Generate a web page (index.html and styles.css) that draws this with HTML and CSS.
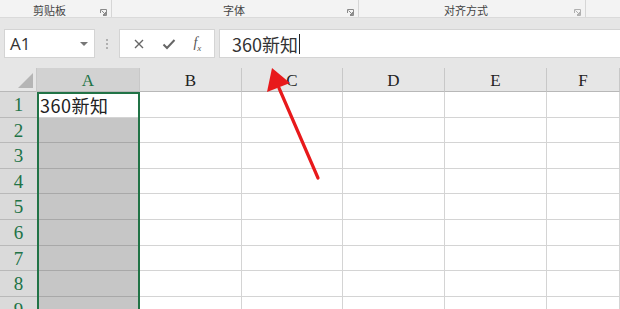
FILE: index.html
```html
<!DOCTYPE html>
<html lang="zh-CN">
<head>
    <meta charset="UTF-8">
    <title>360新知</title>
    <link rel="stylesheet" href="styles.css">
</head>
<body>
    <div class="ribbon">
        <div class="group g1"><span class="group-label">剪贴板</span><svg class="launcher" width="7" height="7" viewBox="0 0 7 7"><path d="M0.5 4V0.5H6.5V6.5H3M1.5 1.5L5.5 5.5M5.5 3V5.5H3" stroke="#8a8a8a" fill="none"/></svg></div>
        <div class="group g2"><span class="group-label">字体</span><svg class="launcher" width="7" height="7" viewBox="0 0 7 7"><path d="M0.5 4V0.5H6.5V6.5H3M1.5 1.5L5.5 5.5M5.5 3V5.5H3" stroke="#8a8a8a" fill="none"/></svg></div>
        <div class="group g3"><span class="group-label">对齐方式</span><svg class="launcher" width="7" height="7" viewBox="0 0 7 7"><path d="M0.5 4V0.5H6.5V6.5H3M1.5 1.5L5.5 5.5M5.5 3V5.5H3" stroke="#b0b0b0" fill="none"/></svg></div>
        <div class="group g4"></div>
    </div>
    <div class="formula-area">
        <div class="name-box">
            <span class="name-text">A1</span>
            <svg class="drop" width="8" height="4" viewBox="0 0 8 4"><path d="M0 0h8L4 4z" fill="#777"/></svg>
        </div>
        <div class="grip"><i></i><i></i><i></i></div>
        <div class="fx-buttons">
            <svg width="12" height="12" viewBox="0 0 12 12"><path d="M2 2l8 8M10 2l-8 8" stroke="#666" stroke-width="1.4"/></svg>
            <svg width="14" height="12" viewBox="0 0 14 12"><path d="M1.5 6.5l3.5 3.5 7.5-8" stroke="#666" stroke-width="2" fill="none"/></svg>
            <span class="fx">f<sub>x</sub></span>
        </div>
        <div class="formula-input"><span>360新知</span><span class="caret"></span></div>
    </div>
    <div class="sheet">
        <div class="grid">
            <div class="corner"></div>
            <div class="col-head active">A</div>
            <div class="col-head">B</div>
            <div class="col-head">C</div>
            <div class="col-head">D</div>
            <div class="col-head">E</div>
            <div class="col-head">F</div>

            <div class="row-head">1</div><div class="cell a1">360新知</div><div class="cell"></div><div class="cell"></div><div class="cell"></div><div class="cell"></div><div class="cell"></div>
            <div class="row-head">2</div><div class="cell sel"></div><div class="cell"></div><div class="cell"></div><div class="cell"></div><div class="cell"></div><div class="cell"></div>
            <div class="row-head">3</div><div class="cell sel"></div><div class="cell"></div><div class="cell"></div><div class="cell"></div><div class="cell"></div><div class="cell"></div>
            <div class="row-head">4</div><div class="cell sel"></div><div class="cell"></div><div class="cell"></div><div class="cell"></div><div class="cell"></div><div class="cell"></div>
            <div class="row-head">5</div><div class="cell sel"></div><div class="cell"></div><div class="cell"></div><div class="cell"></div><div class="cell"></div><div class="cell"></div>
            <div class="row-head">6</div><div class="cell sel"></div><div class="cell"></div><div class="cell"></div><div class="cell"></div><div class="cell"></div><div class="cell"></div>
            <div class="row-head">7</div><div class="cell sel"></div><div class="cell"></div><div class="cell"></div><div class="cell"></div><div class="cell"></div><div class="cell"></div>
            <div class="row-head">8</div><div class="cell sel"></div><div class="cell"></div><div class="cell"></div><div class="cell"></div><div class="cell"></div><div class="cell"></div>
            <div class="row-head">9</div><div class="cell sel"></div><div class="cell"></div><div class="cell"></div><div class="cell"></div><div class="cell"></div><div class="cell"></div>
        </div>
        <div class="selection"></div>
    </div>
    <svg class="arrow" width="620" height="309" viewBox="0 0 620 309">
        <line x1="318" y1="178" x2="279" y2="88" stroke="#e8191b" stroke-width="3.2" stroke-linecap="round"/>
        <path d="M272 68L267 92L290 83z" fill="#e8191b"/>
    </svg>
</body>
</html>
```

FILE: styles.css
```css
body {
    margin: 0;
    width: 620px;
    height: 309px;
    overflow: hidden;
    background-color: #e6e6e6;
    font-family: "Noto Sans CJK SC", sans-serif;
    position: relative;
}
.ribbon {
    display: flex;
    height: 17px;
    background-color: #f3f3f3;
    border-bottom: 1px solid #dadada;
}
.group {
    position: relative;
    height: 17px;
    border-right: 1px solid #d6d6d6;
    display: flex;
    justify-content: center;
}
.g1 { width: 111px; }
.g2 { width: 246px; }
.g3 { width: 226px; }
.g4 { flex: 1; border-right: none; }
.group-label {
    font-size: 11px;
    line-height: 17px;
    padding-top: 2px;
    color: #444;
    padding-right: 12px;
}
.g2 .group-label { padding-left: 10px; }
.launcher {
    position: absolute;
    right: 4px;
    top: 9px;
}
.formula-area {
    display: flex;
    align-items: center;
    height: 31px;
    padding-top: 10px;
    padding-bottom: 9px;
    box-sizing: content-box;
}
.name-box {
    margin-left: 4px;
    width: 91px;
    height: 29px;
    box-sizing: border-box;
    background-color: #fff;
    border: 1px solid #d4d4d4;
    display: flex;
    align-items: center;
    justify-content: space-between;
    padding: 0 6px 0 5px;
}
.name-text {
    font-family: "Open Sans", sans-serif;
    font-size: 17px;
    color: #333;
}
.grip {
    width: 24px;
    display: flex;
    flex-direction: column;
    align-items: center;
    gap: 2px;
}
.grip i {
    width: 2px;
    height: 2px;
    background-color: #b0b0b0;
}
.fx-buttons {
    width: 96px;
    height: 29px;
    box-sizing: border-box;
    background-color: #fff;
    border: 1px solid #d4d4d4;
    display: flex;
    align-items: center;
    justify-content: space-around;
    padding: 0 4px;
}
.fx {
    font-family: "Liberation Serif", serif;
    font-style: italic;
    font-size: 14px;
    color: #555;
}
.fx sub { font-size: 9px; }
.formula-input {
    margin-left: 4px;
    flex: 1;
    height: 29px;
    box-sizing: border-box;
    background-color: #fff;
    border: 1px solid #d4d4d4;
    border-right: none;
    display: flex;
    align-items: center;
    padding-left: 12px;
    font-size: 18px;
    color: #333;
}
.caret {
    width: 1px;
    height: 20px;
    background-color: #222;
    margin-left: 1px;
}
.sheet {
    position: relative;
}
.grid {
    display: grid;
    grid-template-columns: 37px 103px 102px 101px 102px 102px 1fr;
    grid-template-rows: 24px repeat(9, 25.6px);
    background-color: #fff;
}
.corner {
    background-color: #e6e6e6;
    border-right: 1px solid #c8c8c8;
    border-bottom: 1px solid #b8b8b8;
    position: relative;
}
.corner::after {
    content: "";
    position: absolute;
    right: 3px;
    bottom: 3px;
    border-left: 15px solid transparent;
    border-bottom: 15px solid #b5b5b5;
}
.col-head {
    background-color: #e6e6e6;
    border-right: 1px solid #c8c8c8;
    border-bottom: 1px solid #b8b8b8;
    box-sizing: border-box;
    text-align: center;
    font-family: "Liberation Serif", serif;
    font-size: 17px;
    line-height: 26px;
    color: #222;
}
.col-head.active {
    background-color: #d2d2d2;
    color: #217346;
}
.row-head {
    background-color: #dadada;
    border-bottom: 1px solid #b9b9b9;
    box-sizing: border-box;
    text-align: center;
    font-family: "Liberation Serif", serif;
    font-size: 19px;
    line-height: 26px;
    color: #217346;
}
.cell {
    border-right: 1px solid #d4d4d4;
    border-bottom: 1px solid #d4d4d4;
    box-sizing: border-box;
}
.cell.sel {
    background-color: #c6c6c6;
    border-bottom-color: #a8a8a8;
}
.cell.a1 {
    font-size: 18px;
    letter-spacing: 0.5px;
    line-height: 26px;
    padding-left: 3px;
    color: #222;
}
.selection {
    position: absolute;
    left: 37px;
    top: 24px;
    width: 103px;
    height: 260px;
    box-sizing: border-box;
    border: 2px solid #217346;
}
.arrow {
    position: absolute;
    left: 0;
    top: 0;
}
```
